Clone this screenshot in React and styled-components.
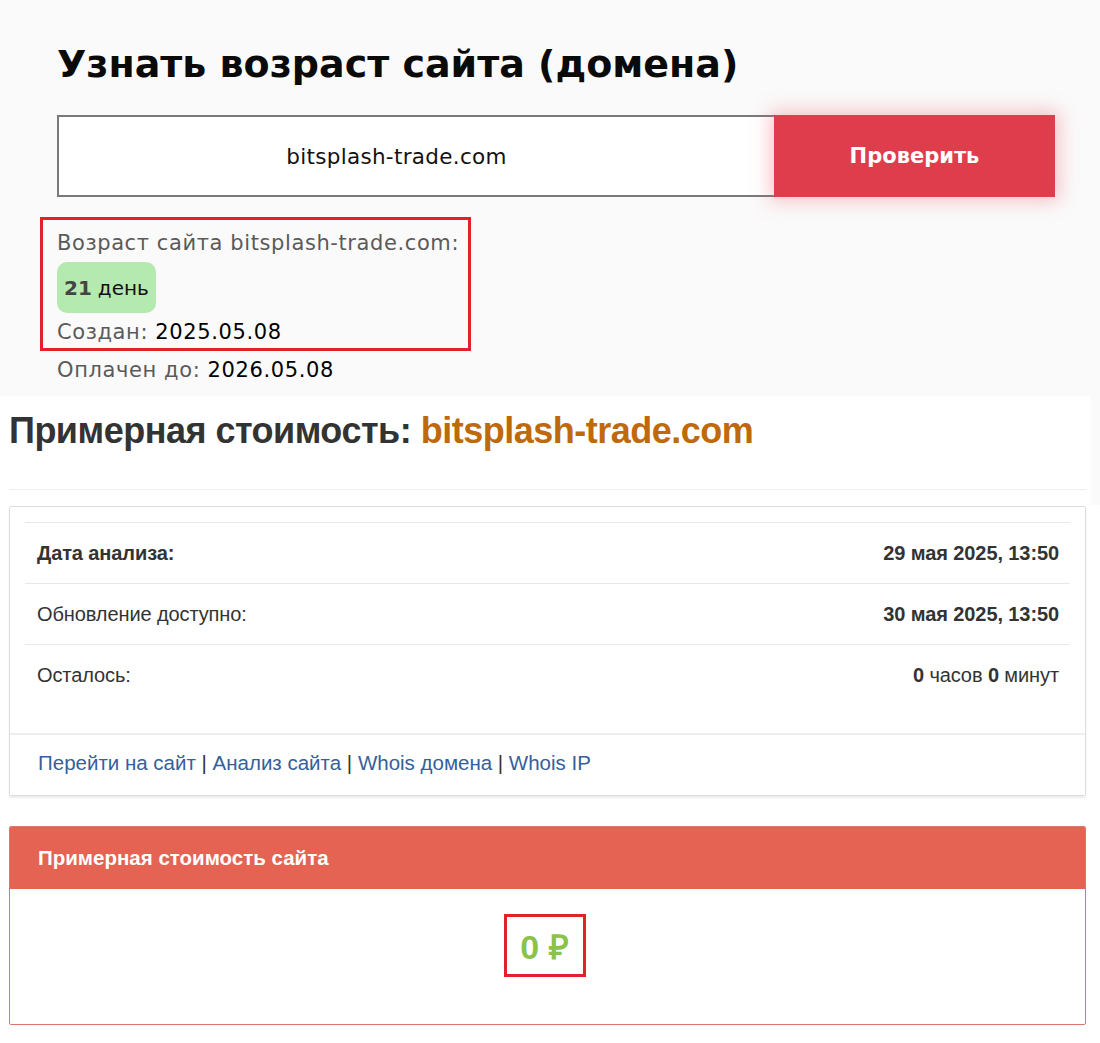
import React from 'react';
import styled, { createGlobalStyle } from 'styled-components';

const GlobalStyle = createGlobalStyle`
  html, body {
    margin: 0;
    padding: 0;
    background: #ffffff;
  }
  body {
    font-family: "DejaVu Sans", "Noto Sans", sans-serif;
  }
`;

const Page = styled.div`
  width: 1100px;
  display: flex;
  flex-direction: column;
`;

const AgeSection = styled.section`
  background: #fafafa;
  padding: 39px 45px 0 57px;
  height: 396px;
  box-sizing: border-box;
`;

const Title = styled.h1`
  margin: 0;
  font-family: "DejaVu Sans", sans-serif;
  font-weight: 700;
  font-size: 38px;
  line-height: 50px;
  color: #0a0a0a;
`;

const Form = styled.form`
  display: flex;
  margin-top: 26px;
  height: 82px;
`;

const DomainInput = styled.input`
  flex: 1;
  box-sizing: border-box;
  border: 2px solid #7a7a7a;
  border-right: none;
  background: #fff;
  text-align: center;
  font-family: "DejaVu Sans", sans-serif;
  font-size: 21.5px;
  letter-spacing: 0.3px;
  color: #111;
  padding: 0 40px 0 0;
  outline: none;
`;

const CheckButton = styled.button`
  width: 281px;
  border: none;
  background: #df3d4b;
  color: #fff;
  font-family: "DejaVu Sans", sans-serif;
  font-weight: 700;
  font-size: 21px;
  box-shadow: 0 0 18px 4px rgba(240, 90, 100, 0.35);
  cursor: pointer;
`;

const Result = styled.div`
  display: flex;
  flex-direction: column;
  align-items: flex-start;
  margin-top: 20px;
  margin-left: -17px;
`;

const Marked = styled.div`
  border: 3px solid #e3212b;
  padding: 8px 9px 1px 14px;
  display: flex;
  flex-direction: column;
  align-items: flex-start;
  gap: 4px;
`;

const Line = styled.div`
  font-size: 21px;
  line-height: 30px;
  letter-spacing: 0.6px;
  color: #5a5a5a;
  padding-left: ${p => (p.$indent ? '17px' : '0')};
  margin-top: ${p => (p.$indent ? '4px' : '0')};
  b {
    font-weight: 400;
    color: #000;
  }
`;

const AgeBadge = styled.div`
  background: #b4eab0;
  border-radius: 10px;
  height: 51px;
  padding: 0 7px;
  display: flex;
  align-items: center;
  gap: 6px;
  font-size: 20px;
  color: #111;
  strong {
    color: #444;
  }
`;

const Lower = styled.div`
  display: flex;
  align-items: flex-start;
`;

const SideStrip = styled.div`
  flex: 1;
  height: 109px;
  background: #fafafa;
`;

const PriceSection = styled.section`
  width: 1091px;
  background: #fff;
  padding: 0 5px 20px 9px;
  box-sizing: border-box;
  font-family: "Liberation Sans", Arial, sans-serif;
  color: #333;
`;

const PriceTitle = styled.h2`
  margin: 0;
  padding: 14px 0 0;
  font-size: 36px;
  line-height: 42px;
  font-weight: 700;
  letter-spacing: -0.5px;
  color: #333;
  height: 79px;
  border-bottom: 1px solid #eeeeee;
  span {
    color: #c0690c;
  }
`;

const Panel = styled.div`
  margin-top: 16px;
  border: 1px solid #dddddd;
  border-radius: 2px;
  box-shadow: 0 2px 2px rgba(0, 0, 0, 0.08);
  background: #fff;
`;

const InfoTable = styled.div`
  padding: 15px 15px 28px;
`;

const Row = styled.div`
  display: flex;
  justify-content: space-between;
  align-items: center;
  height: 60px;
  border-top: 1px solid #e8e8e8;
  padding: 0 11px 0 12px;
  font-size: 20px;
  letter-spacing: -0.1px;
  b {
    font-weight: 700;
  }
`;

const Label = styled.span`
  font-weight: ${p => (p.$bold ? 700 : 400)};
`;

const Links = styled.div`
  border-top: 2px solid #eeeeee;
  background: #fff;
  padding: 16px 28px 20px;
  font-size: 20.5px;
  color: #333;
  a {
    color: #35609a;
    text-decoration: none;
  }
`;

const CostPanel = styled.div`
  margin-top: 30px;
  border: 1px solid #d57a6c;
  border-radius: 2px;
  overflow: hidden;
`;

const CostHeader = styled.div`
  background: #e46353;
  height: 62px;
  display: flex;
  align-items: center;
  padding: 0 28px;
  color: #fff;
  font-weight: 700;
  font-size: 20.5px;
`;

const CostBody = styled.div`
  height: 135px;
  display: flex;
  justify-content: center;
  padding-top: 25px;
  box-sizing: border-box;
`;

const CostValue = styled.div`
  border: 3px solid #e3212b;
  width: 82px;
  height: 63px;
  box-sizing: border-box;
  display: flex;
  align-items: center;
  justify-content: center;
  color: #8bc34a;
  font-weight: 700;
  font-size: 34px;
  margin-left: -6px;
`;

export default function App() {
  return (
    <Page>
      <GlobalStyle />
      <AgeSection>
        <Title>Узнать возраст сайта (домена)</Title>
        <Form onSubmit={e => e.preventDefault()}>
          <DomainInput defaultValue="bitsplash-trade.com" />
          <CheckButton type="submit">Проверить</CheckButton>
        </Form>
        <Result>
          <Marked>
            <Line>Возраст сайта bitsplash-trade.com:</Line>
            <AgeBadge>
              <strong>21</strong> день
            </AgeBadge>
            <Line>
              Создан: <b>2025.05.08</b>
            </Line>
          </Marked>
          <Line $indent>
            Оплачен до: <b>2026.05.08</b>
          </Line>
        </Result>
      </AgeSection>
      <Lower>
        <PriceSection>
          <PriceTitle>
            Примерная стоимость: <span>bitsplash-trade.com</span>
          </PriceTitle>
          <Panel>
            <InfoTable>
              <Row>
                <Label $bold>Дата анализа:</Label>
                <b>29 мая 2025, 13:50</b>
              </Row>
              <Row>
                <Label>Обновление доступно:</Label>
                <b>30 мая 2025, 13:50</b>
              </Row>
              <Row>
                <Label>Осталось:</Label>
                <span>
                  <b>0</b> часов <b>0</b> минут
                </span>
              </Row>
            </InfoTable>
            <Links>
              <a href="#">Перейти на сайт</a> | <a href="#">Анализ сайта</a> |{' '}
              <a href="#">Whois домена</a> | <a href="#">Whois IP</a>
            </Links>
          </Panel>
          <CostPanel>
            <CostHeader>Примерная стоимость сайта</CostHeader>
            <CostBody>
              <CostValue>0 ₽</CostValue>
            </CostBody>
          </CostPanel>
        </PriceSection>
        <SideStrip />
      </Lower>
    </Page>
  );
}
